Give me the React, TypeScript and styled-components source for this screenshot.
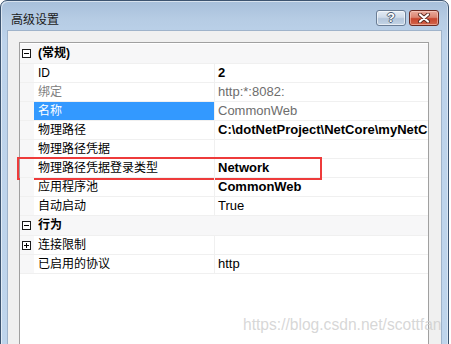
import React from "react";
import styled, { createGlobalStyle } from "styled-components";

const GlobalStyle = createGlobalStyle`
  html, body {
    margin: 0;
    padding: 0;
    background: #ffffff;
  }
  body {
    font-family: "Liberation Sans", "Noto Sans CJK SC", sans-serif;
  }
`;

type Prop = {
  name: string;
  value?: string;
  bold?: boolean;
  disabled?: boolean;
  selected?: boolean;
  expandable?: boolean;
  marked?: boolean;
};

type Section = { title: string; props: Prop[] };

const sections: Section[] = [
  {
    title: "(常规)",
    props: [
      { name: "ID", value: "2", bold: true },
      { name: "绑定", value: "http:*:8082:", disabled: true },
      { name: "名称", value: "CommonWeb", selected: true },
      { name: "物理路径", value: "C:\\dotNetProject\\NetCore\\myNetC", bold: true },
      { name: "物理路径凭据", value: "" },
      { name: "物理路径凭据登录类型", value: "Network", bold: true, marked: true },
      { name: "应用程序池", value: "CommonWeb", bold: true },
      { name: "自动启动", value: "True" },
    ],
  },
  {
    title: "行为",
    props: [
      { name: "连接限制", value: "", expandable: true },
      { name: "已启用的协议", value: "http" },
    ],
  },
];

const AdvancedSettings: React.FC = () => {
  return (
    <Page>
      <GlobalStyle />
      <Window>
        <TitleBar>
          <Title>高级设置</Title>
          <Caption>
            <HelpButton>?</HelpButton>
            <CloseButton>
              <svg width="14" height="10" viewBox="0 0 14 10">
                <path d="M3 1.5 L11 8.5 M11 1.5 L3 8.5" stroke="#5a2a22" strokeWidth="4" strokeLinecap="round" />
                <path d="M3 1.5 L11 8.5 M11 1.5 L3 8.5" stroke="#ffffff" strokeWidth="2.2" strokeLinecap="round" />
              </svg>
            </CloseButton>
          </Caption>
        </TitleBar>
        <Client>
          <Grid>
            {sections.map((s) => (
              <React.Fragment key={s.title}>
                <CategoryRow>
                  <Margin>
                    <Toggle open />
                  </Margin>
                  <CategoryLabel>{s.title}</CategoryLabel>
                </CategoryRow>
                {s.props.map((p) => (
                  <PropRow key={p.name}>
                    <Margin>{p.expandable && <Toggle />}</Margin>
                    <NameCell selected={p.selected} disabled={p.disabled}>
                      {p.name}
                    </NameCell>
                    <ValueCell bold={p.bold} muted={p.disabled || p.selected}>
                      {p.value}
                    </ValueCell>
                    {p.marked && <Mark />}
                  </PropRow>
                ))}
              </React.Fragment>
            ))}
          </Grid>
        </Client>
      </Window>
      <Watermark>https://blog.csdn.net/scottfan</Watermark>
    </Page>
  );
};

const Page = styled.div`
  position: relative;
  width: 451px;
  height: 344px;
  overflow: hidden;
  background: #ffffff;
`;

const Window = styled.div`
  width: 449px;
  height: 360px;
  box-sizing: border-box;
  border: 1px solid #3d5470;
  border-radius: 7px 7px 0 0;
  padding: 0 6px;
  display: flex;
  flex-direction: column;
  background: linear-gradient(180deg, #a7bfda 0px, #b6cce4 18px, #bdd3eb 40px, #bfd5ec 100%);
  box-shadow: inset 1px 1px 0 rgba(255, 255, 255, 0.55), inset -1px 0 0 rgba(255, 255, 255, 0.4);
`;

const TitleBar = styled.div`
  height: 29px;
  display: flex;
  align-items: flex-start;
  flex-shrink: 0;
`;

const Title = styled.div`
  margin: 10px 0 0 4px;
  font-family: "Noto Sans CJK SC", sans-serif;
  font-size: 12px;
  line-height: 16px;
  color: #1a1a1a;
`;

const Caption = styled.div`
  margin: 9px 3px 0 auto;
  display: flex;
  gap: 3px;
`;

const CaptionButton = styled.div`
  width: 30px;
  height: 16px;
  box-sizing: border-box;
  border-radius: 3px;
  display: flex;
  align-items: center;
  justify-content: center;
`;

const HelpButton = styled(CaptionButton)`
  border: 1px solid #6a7d95;
  background: linear-gradient(180deg, #e3ebf4 0%, #cfdbe9 45%, #b4c6db 55%, #c3d4e6 100%);
  box-shadow: inset 0 0 0 1px rgba(255, 255, 255, 0.6);
  color: #ffffff;
  font-family: "Liberation Sans", sans-serif;
  font-weight: bold;
  font-size: 13px;
  line-height: 14px;
  text-shadow: -1px 0 #4e5e72, 1px 0 #4e5e72, 0 -1px #4e5e72, 0 1px #4e5e72;
`;

const CloseButton = styled(CaptionButton)`
  border: 1px solid #6b2a22;
  background: linear-gradient(180deg, #e9aa9c 0%, #dc8572 45%, #c8452e 55%, #d2664c 100%);
  box-shadow: inset 0 0 0 1px rgba(255, 220, 210, 0.5);
`;

const Client = styled.div`
  flex: 1;
  background: #f0f0f0;
  border: 1px solid #9fb3ca;
  padding: 11px 12px 0 11px;
`;

const Grid = styled.div`
  position: relative;
  border: 1px solid #a0a0a0;
  border-bottom: none;
  background: #ffffff;
  height: 320px;
  padding-top: 1px;
  font-size: 12px;
`;

const CategoryRow = styled.div`
  display: grid;
  grid-template-columns: 14px 1fr;
  height: 19px;
  border-bottom: 1px solid #f0f0f0;
  background: #f7f7f8;
`;

const PropRow = styled.div`
  position: relative;
  display: grid;
  grid-template-columns: 14px 181px 1fr;
  height: 18px;
  border-bottom: 1px solid #f0f0f0;
`;

const Margin = styled.div`
  background: #f7f7f8;
  display: flex;
  align-items: center;
  padding-left: 2px;
`;

const Toggle = styled.div<{ open?: boolean }>`
  position: relative;
  width: 9px;
  height: 9px;
  box-sizing: border-box;
  border: 1px solid #1a1a1a;
  background: #ffffff;
  &::before {
    content: "";
    position: absolute;
    left: 1px;
    top: 3px;
    width: 5px;
    height: 1px;
    background: #000000;
  }
  &::after {
    content: "";
    display: ${({ open }) => (open ? "none" : "block")};
    position: absolute;
    left: 3px;
    top: 1px;
    width: 1px;
    height: 5px;
    background: #000000;
  }
`;

const CategoryLabel = styled.div`
  padding-left: 4px;
  font-family: "Liberation Sans", "Noto Sans CJK SC", sans-serif;
  font-weight: bold;
  font-size: 12px;
  line-height: 19px;
  color: #000000;
`;

const NameCell = styled.div<{ selected?: boolean; disabled?: boolean }>`
  padding-left: 4px;
  border-right: 1px solid #f0f0f0;
  font-family: "Liberation Sans", "Noto Sans CJK SC", sans-serif;
  font-size: 12px;
  line-height: 18px;
  white-space: nowrap;
  overflow: hidden;
  background: ${({ selected }) => (selected ? "#3399ff" : "transparent")};
  color: ${({ selected, disabled }) => (selected ? "#ffffff" : disabled ? "#808080" : "#000000")};
`;

const ValueCell = styled.div<{ bold?: boolean; muted?: boolean }>`
  padding-left: 3px;
  font-family: "Liberation Sans", sans-serif;
  font-size: 13px;
  line-height: 18px;
  white-space: nowrap;
  overflow: hidden;
  font-weight: ${({ bold }) => (bold ? "bold" : "normal")};
  color: ${({ muted }) => (muted ? "#6d6d6d" : "#000000")};
`;

const Mark = styled.div`
  position: absolute;
  left: -3px;
  top: -2px;
  width: 305px;
  height: 23px;
  box-sizing: border-box;
  border: 2px solid #ee3b3b;
  pointer-events: none;
`;

const Watermark = styled.div`
  position: absolute;
  left: 243px;
  top: 315px;
  font-family: "Liberation Sans", sans-serif;
  font-size: 15.6px;
  line-height: 20px;
  color: rgba(205, 205, 205, 0.8);
  white-space: nowrap;
`;

export default AdvancedSettings;
